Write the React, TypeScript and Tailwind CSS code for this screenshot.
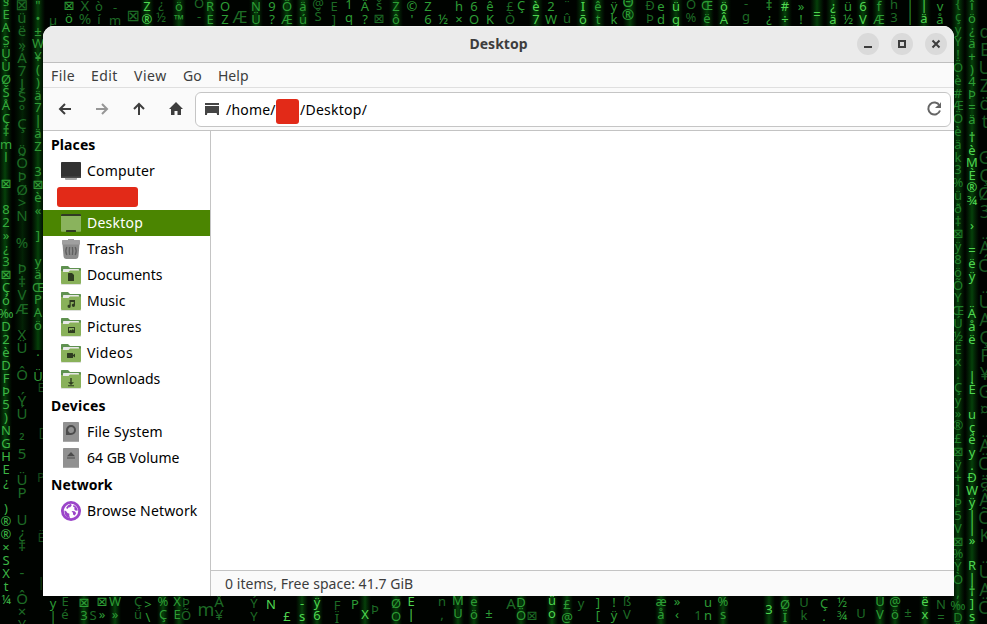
import React from "react";

type Rain = { x: number; y: number; chars: string; step?: number; size?: number; color?: string };

const BRIGHT = "#4fd650";
const MID = "#2d9d35";
const DIM = "#1d6a25";

// Each stream is one vertical run of glyphs; a space leaves a gap.
const STREAMS: Rain[] = [
  { x: 6, y: 6, chars: "§EASÜÙØŠÅÇ‡ml ⊠ 82»¿3⊠", color: "#35ab3c", step: 13 },
  { x: 6, y: 292, chars: "Çó‰D2èDFÞ5)NGHE¿ )®®×SXt¼", color: "#3cb544", step: 13 },
  { x: 22, y: 10, chars: "⊠üë»Á7JŠ°Ç öÕÞØ>N % Þ‡VÆ XÜ Ô ÝÚ ²5 ÜP U¿‡ - Ô×¥ÜE  1 i -  oü", step: 13.2, color: DIM, size: 15 },
  { x: 38, y: 10, chars: '"•±W¥()ä7|äZ 3⊠è« ] yäŒPAö . Ü', step: 12.8, color: "#329a37" },
  { x: 41, y: 392, chars: "Ë  [  P   Ë  |", step: 15, color: "#154a1a" },
  { x: 53, y: 25, chars: "µ", color: DIM },
  { x: 69, y: 10, chars: "⊠ö", color: MID }, { x: 85, y: 11, chars: "X%", color: DIM, size: 15 },
  { x: 99, y: 11, chars: "òí", color: DIM }, { x: 115, y: 12, chars: "-m", color: DIM },
  { x: 133, y: 21, chars: "⊠", color: DIM, size: 16 }, { x: 147, y: 11, chars: "Z®", color: BRIGHT },
  { x: 161, y: 9, chars: "¿½", color: DIM }, { x: 179, y: 11, chars: "ö™", color: MID },
  { x: 199, y: 8, chars: "Ö-", color: DIM }, { x: 210, y: 11, chars: "RE", color: MID },
  { x: 225, y: 11, chars: "ÖZ", color: MID }, { x: 240, y: 23, chars: "Æ", color: DIM, size: 17 },
  { x: 256, y: 11, chars: "NÜ", color: MID }, { x: 272, y: 11, chars: "9?", color: MID },
  { x: 287, y: 11, chars: "ÔÆ", color: MID }, { x: 303, y: 11, chars: "äú", color: MID },
  { x: 318, y: 8, chars: "@Š", color: DIM }, { x: 334, y: 11, chars: "E]", color: DIM },
  { x: 349, y: 9, chars: "1q", color: MID }, { x: 365, y: 11, chars: "Â?", color: MID },
  { x: 379, y: 10, chars: "š⊠", color: DIM }, { x: 396, y: 11, chars: "Zô", color: MID },
  { x: 412, y: 11, chars: "©'", color: MID }, { x: 428, y: 11, chars: "Z6", color: MID },
  { x: 443, y: 24, chars: "½", color: MID }, { x: 459, y: 11, chars: "h×", color: MID },
  { x: 474, y: 11, chars: "6O", color: MID }, { x: 490, y: 11, chars: "êK", color: MID },
  { x: 510, y: 11, chars: "£Ò", color: DIM }, { x: 521, y: 10, chars: "Ç", color: MID },
  { x: 536, y: 11, chars: "è7", color: BRIGHT }, { x: 551, y: 11, chars: "2W", color: MID },
  { x: 567, y: 10, chars: "¨û", color: DIM }, { x: 583, y: 11, chars: "Ïõ", color: BRIGHT },
  { x: 598, y: 11, chars: "êt", color: MID }, { x: 614, y: 11, chars: "ÿk", color: MID },
  { x: 628, y: 7, chars: "Θ®", color: MID, size: 15 }, { x: 650, y: 10, chars: "ÐÞ", color: DIM },
  { x: 661, y: 11, chars: "ed", color: MID }, { x: 676, y: 11, chars: "üg", color: BRIGHT },
  { x: 691, y: 9, chars: "Ö%", color: DIM }, { x: 707, y: 10, chars: "Œë", color: MID },
  { x: 724, y: 11, chars: "öÂ", color: BRIGHT }, { x: 746, y: 8, chars: "-g", color: DIM },
  { x: 769, y: 10, chars: "‡¿", color: MID }, { x: 785, y: 11, chars: "#÷", color: BRIGHT },
  { x: 801, y: 11, chars: "»!", color: MID }, { x: 817, y: 19, chars: "=", color: BRIGHT },
  { x: 833, y: 11, chars: "¿ä", color: BRIGHT }, { x: 848, y: 11, chars: "ü½", color: MID },
  { x: 863, y: 11, chars: "6V", color: BRIGHT }, { x: 879, y: 11, chars: "fÆ", color: MID },
  { x: 894, y: 9, chars: "h3", color: DIM }, { x: 910, y: 9, chars: "||", color: MID },
  { x: 924, y: 10, chars: "|ä", color: BRIGHT }, { x: 940, y: 11, chars: "vå", color: MID },
  { x: 958, y: 8, chars: "{çyY!Öè#ÆÖèäk3%üð‡⊠ÿ8öÕYŒÚ½Ëx.Çy»®£⊠ÿ+]Þ5V⊠%ŸÒ,‰DÄ", step: 12.8, color: "#21802a" },
  { x: 985, y: 38, chars: "dEUZöt GÇØ3 ÄÓ ÜAÇF¥G¤ ÄÖäÂÕK ÜAÖ", step: 18, color: "#185820", size: 18 },
  { x: 972, y: 10, chars: "îö¿ä+)4Þ=ä", step: 12.7, color: MID },
  { x: 972, y: 142, chars: "†èMÈ®¾ › =ëÿ  Äåë  |È uçëy.ÐWÿ||» R|†]s  ó", step: 12.6, color: BRIGHT },
  { x: 53, y: 608, chars: "y|", color: MID }, { x: 65, y: 606, chars: "Êé", color: DIM },
  { x: 84, y: 607, chars: "⊠3", color: MID }, { x: 93, y: 620, chars: "S", color: DIM },
  { x: 102, y: 606, chars: "⊠»", color: MID }, { x: 115, y: 606, chars: "W»", color: MID },
  { x: 138, y: 606, chars: "Çü", color: DIM }, { x: 148, y: 609, chars: ">\\", color: MID },
  { x: 163, y: 606, chars: "%Ç", color: MID }, { x: 177, y: 606, chars: "XE", color: MID },
  { x: 186, y: 607, chars: "ÞÕ", color: DIM }, { x: 206, y: 616, chars: "m", color: DIM, size: 18 },
  { x: 219, y: 607, chars: "Å¥", color: DIM, size: 15 }, { x: 254, y: 608, chars: "ÝY", color: DIM },
  { x: 271, y: 609, chars: "N", color: BRIGHT }, { x: 287, y: 621, chars: "£", color: BRIGHT },
  { x: 302, y: 608, chars: "-s", color: BRIGHT }, { x: 317, y: 607, chars: "ÿ6", color: BRIGHT },
  { x: 337, y: 610, chars: "FÏ", color: DIM }, { x: 355, y: 609, chars: "P", color: MID },
  { x: 365, y: 619, chars: "X", color: BRIGHT }, { x: 375, y: 614, chars: "Þ", color: DIM },
  { x: 396, y: 608, chars: "ØO", color: MID }, { x: 411, y: 606, chars: "Ë|", color: BRIGHT },
  { x: 442, y: 606, chars: "n,", color: DIM }, { x: 458, y: 605, chars: "MU", color: MID },
  { x: 474, y: 606, chars: "eö", color: MID }, { x: 489, y: 618, chars: "±", color: MID },
  { x: 511, y: 609, chars: "A", color: DIM, size: 15 }, { x: 521, y: 607, chars: "DÖ", color: MID },
  { x: 532, y: 620, chars: "⊠", color: DIM }, { x: 552, y: 605, chars: "üo", color: BRIGHT },
  { x: 567, y: 609, chars: "£@", color: MID }, { x: 581, y: 608, chars: "y", color: DIM },
  { x: 598, y: 607, chars: "][", color: MID }, { x: 614, y: 607, chars: "!ÿ", color: MID },
  { x: 627, y: 606, chars: "ßV", color: DIM }, { x: 661, y: 606, chars: "æå", color: MID },
  { x: 677, y: 606, chars: "»‹", color: MID }, { x: 698, y: 620, chars: "1", color: DIM },
  { x: 708, y: 607, chars: "un", color: MID }, { x: 723, y: 606, chars: "%s", color: MID },
  { x: 769, y: 614, chars: "3", color: BRIGHT }, { x: 785, y: 609, chars: "ØÏ", color: MID },
  { x: 804, y: 607, chars: "Uk", color: DIM }, { x: 824, y: 608, chars: "Ç.", color: MID },
  { x: 842, y: 607, chars: "½¾", color: MID }, { x: 861, y: 618, chars: "U", color: DIM },
  { x: 880, y: 606, chars: "ÜV", color: MID }, { x: 895, y: 606, chars: "@ö", color: MID },
  { x: 908, y: 617, chars: "±", color: DIM }, { x: 925, y: 606, chars: "ëx", color: BRIGHT },
  { x: 941, y: 609, chars: "N=", color: DIM }
];

const GLOWS = [5, 38, 147, 179, 210, 256, 287, 303, 396, 536, 583, 598, 630, 676, 707, 724, 785, 817, 833, 863, 879, 924, 958, 972];
const LOW_GLOWS = [84, 115, 163, 179, 302, 317, 365, 396, 458, 474, 521, 552, 567, 661, 723, 769, 785, 880, 895, 925];

function Wallpaper() {
  return (
    <svg className="absolute inset-0" width="987" height="624" viewBox="0 0 987 624" aria-hidden="true">
      <defs>
        <linearGradient id="glow">
          <stop offset="0" stopColor="#064c0c" stopOpacity="0" />
          <stop offset=".5" stopColor="#08620f" stopOpacity=".65" />
          <stop offset="1" stopColor="#064c0c" stopOpacity="0" />
        </linearGradient>
      </defs>
      <rect width="987" height="624" fill="#000300" />
      {GLOWS.map((x) => <rect key={x} x={x - 7} y="0" width="14" height={x > 950 ? 624 : x < 20 ? 450 : x < 50 ? 350 : 27} fill="url(#glow)" />)}
      {LOW_GLOWS.map((x) => <rect key={x} x={x - 6} y="594" width="12" height="30" fill="url(#glow)" />)}
      <rect x="14" width="17" height="330" fill="url(#glow)" opacity=".5" />
      {STREAMS.map((s, n) => (
        <g key={n} fill={s.color} fontFamily="Noto Sans, DejaVu Sans, sans-serif" fontSize={s.size ?? 13} textAnchor="middle">
          {Array.from(s.chars).map((c, i) => c === " " ? null : <text key={i} x={s.x} y={s.y + i * (s.step ?? 13)}>{c}</text>)}
        </g>
      ))}
    </svg>
  );
}

type Glyph = "document" | "music" | "picture" | "video" | "download";

function Folder({ glyph }: { glyph: Glyph }) {
  return (
    <svg width="20" height="20" viewBox="0 0 20 20">
      <path d="M0 1.800Q0 1 .8 1H7l2 2h10.200q.8 0 .8.8V12H0Z" fill="#5f9150" />
      <path d="M0 6h20v12.300q0 .7-.7.7H.7q-.7 0-.7-.7Z" fill="#89b15a" />
      <path d="M2 4.700q0-.7.7-.7h14.600q.7 0 .7.7V6H9.200L8 7H2Z" fill="#e8e8e8" />
      <path d="M0 7h7.500l1.500-1.500H20V8H0Z" fill="#89b15a" />
      <path d="M0 18.300q0 .7.7.7h18.600q.7 0 .7-.7v.9q0 .6-.7.6H.7q-.7 0-.7-.6Z" fill="#d4d7d1" />
      <g fill="#2e3b20">
        {glyph === "document" && <path d="M7 8.500q0-.5.5-.5H11l2 2v5.500q0 .5-.5.5h-5q-.5 0-.5-.5Z" />}
        {glyph === "music" && <path d="M8.500 9H14v5.300a1.600 1.600 0 1 1-1.200-1.500V11H9.700v4.300a1.600 1.600 0 1 1-1.200-1.500Z" />}
        {glyph === "picture" && <path fillRule="evenodd" d="M7.500 10h6q.5 0 .5.500v5q0 .5-.5.5h-6q-.5 0-.5-.5v-5q0-.5.5-.5ZM8 11v3l1.500-1.300 1 .8 1.300-1.500L13 13.500V11Z" />}
        {glyph === "video" && <path d="M6.500 10h5q.5 0 .5.500V12l2-1.500v4L12 13v1.500q0 .5-.5.5h-5q-.5 0-.5-.5v-4q0-.5.5-.5Z" />}
        {glyph === "download" && <path d="M9.300 9h1.400v4.200H13L10 16l-3-2.800h2.300ZM7 16.200h6v1H7Z" />}
      </g>
    </svg>
  );
}

function ComputerIcon() {
  return <svg width="20" height="20" viewBox="0 0 20 20"><path d="M4 17h12v1q0 1-1 1H5q-1 0-1-1Z" fill="#a7a7a7" /><rect y="1" width="20" height="16" rx=".8" fill="#323232" /><path d="M0 15.500h20v.7q0 .8-.8.8H.8q-.8 0-.8-.8Z" fill="#4a4a4a" /></svg>;
}
function DesktopIcon() {
  return <svg width="20" height="20" viewBox="0 0 20 20"><path d="M0 1.700Q0 1 .7 1h18.600q.7 0 .7.700V18q0 .8-.8.8H.8Q0 18.800 0 18Z" fill="#8ab35d" /><path d="M0 1.700Q0 1 .7 1h18.600q.7 0 .7.700V3H0Z" fill="#303b23" /><path d="M5 19v-1.400q0-.6.6-.6h8.800q.6 0 .6.600V19Z" fill="#303b23" /></svg>;
}
function TrashIcon() {
  return <svg width="20" height="20" viewBox="0 0 20 20"><path d="M7 0h6v2H7Z" fill="#999" /><path d="M1.500 5h17l-1 12q-.2 3-3 3h-9q-2.800 0-3-3Z" fill="#8c8c8c" /><rect x="1" y="1" width="18" height="4.500" rx=".6" fill="#a0a0a0" /><g fill="none" stroke="#606060" strokeWidth="1.400"><path d="M5.800 8q-2 4 0 8M8.600 8q-.7 4 0 8M11.400 8q.7 4 0 8M14.200 8q2 4 0 8" /></g></svg>;
}
function DriveIcon({ removable = false }: { removable?: boolean }) {
  return <svg width="20" height="20" viewBox="0 0 20 20"><rect x="2" width="16" height="20" rx=".8" fill="#919191" /><path d="M2 19h16v.2q0 .8-.8.8H2.800q-.8 0-.8-.8Z" fill="#a9a9a9" />{removable ? <path d="m10 4 4 4.200H6ZM6 9.500h8v1H6Z" fill="#4b4b4b" /> : <path fillRule="evenodd" fill="#4c4c4c" d="M10 3a5 5 0 0 1 0 10H5V8a5 5 0 0 1 5-5Zm0 2a3 3 0 0 0-2 5.200L9 11h1a3 3 0 0 0 0-6Z" />}</svg>;
}
function NetworkIcon() {
  return (
    <svg width="20" height="20" viewBox="0 0 20 20">
      <circle cx="10" cy="10" r="10" fill="#9b45c9" />
      <circle cx="10" cy="10" r="7.200" fill="#fff" />
      <path fill="#9b45c9" d="M3.500 9.500 5 10l1.500 2 2 .8-.3 1.500L9 17c-3.500-.3-6-3.500-5.500-7.500ZM7 4.200l3-1.400.7 1.700-1.500 1.800-1.700.2L6.500 8 5 7ZM12.500 4c2.300.8 4 3 4.300 5.500l-2 .3-1.600-1.500.4-1.800-1.600-1ZM10.500 10l3 .3 1.700 1.700-1.400 2.500-1.600-.8-.3-1.900Z" />
    </svg>
  );
}

type Item = { label: string; icon: React.ReactNode; spacing?: string; active?: boolean };
const places: Item[] = [
  { label: "Desktop", icon: <DesktopIcon />, spacing: "tracking-[0.25px]", active: true },
  { label: "Trash", icon: <TrashIcon />, spacing: "tracking-[0.3px]" },
  { label: "Documents", icon: <Folder glyph="document" /> },
  { label: "Music", icon: <Folder glyph="music" /> },
  { label: "Pictures", icon: <Folder glyph="picture" />, spacing: "tracking-[0.25px]" },
  { label: "Videos", icon: <Folder glyph="video" />, spacing: "tracking-[0.4px]" },
  { label: "Downloads", icon: <Folder glyph="download" /> }
];

function Row({ label, icon, spacing, active }: Item) {
  return <div className={`flex h-[26px] shrink-0 items-center gap-1.5 whitespace-nowrap pl-[18px] ${active ? "bg-[#4b8501] text-white" : ""}`}><span className="shrink-0">{icon}</span><span className={spacing}>{label}</span></div>;
}
function Heading({ children, className = "" }: { children: React.ReactNode; className?: string }) {
  return <h2 className={`flex h-[27px] shrink-0 items-center pl-2 font-bold ${className}`}>{children}</h2>;
}
function WindowButton({ label, children }: { label: string; children: React.ReactNode }) {
  return <button aria-label={label} className="flex size-[22px] items-center justify-center rounded-full bg-[#dadada]"><svg width="12" height="12" viewBox="0 0 12 12" fill="none" stroke="#3d3d3d" strokeWidth="2">{children}</svg></button>;
}

export default function App() {
  return (
    <div className="relative h-[624px] w-[987px] overflow-hidden bg-black font-['Noto_Sans',sans-serif] text-[14px] leading-5 text-black">
      <Wallpaper />
      <div className="relative pl-[43px] pt-[26px]">
        <main className="flex h-[570px] w-[911px] flex-col overflow-hidden rounded-t-[11px] bg-[#fafafa]">
          <header className="grid h-[37px] shrink-0 grid-cols-[1fr_auto_1fr] items-center border-b border-[#bfbfbf] bg-[#ebebeb] pr-[7px] shadow-[inset_0_1px_#f5f5f5]">
            <span />
            <h1 className="pl-[7px] font-bold text-[#3d3d3d]">Desktop</h1>
            <div className="flex justify-end gap-3">
              <WindowButton label="Minimize"><path d="M2 9h8" /></WindowButton>
              <WindowButton label="Maximize"><path d="M3 3h6v6H3Z" /></WindowButton>
              <WindowButton label="Close"><path d="m2.500 2.500 7 7m0-7-7 7" /></WindowButton>
            </div>
          </header>
          <nav className="flex h-[25px] shrink-0 items-center border-b border-[#dfdfdf] pl-2 pt-0.5 text-[#3d3d3d]">
            <span className="w-10 tracking-[0.4px]">File</span>
            <span className="w-[43px] tracking-[0.4px]">Edit</span>
            <span className="w-[49px] tracking-[0.5px]">View</span>
            <span className="w-[35px]">Go</span>
            <span>Help</span>
          </nav>
          <div className="flex h-[43px] shrink-0 items-center border-b border-[#c3c3c3] pl-3.5 pr-[3px]">
            <svg width="138" height="16" viewBox="0 0 138 16" fill="none" stroke="#3d3d3d" strokeWidth="2">
              <path d="M14 8H3M8 3 3 8l5 5" />
              <path d="M39 8h11M45 3l5 5-5 5" stroke="#969696" />
              <path d="M82 14V3M77 8l5-5 5 5" />
              <path d="m119 1 7 7h-2v6h-3.500v-4h-3v4H114V8h-2Z" fill="#3d3d3d" stroke="none" />
            </svg>
            <div className="flex h-[35px] flex-1 items-center rounded-md border border-[#c5c5c5] bg-white pl-[9px] pr-2">
              <svg width="14" height="14" viewBox="0 0 14 14" fill="#454545"><path d="M0 1h14v2H0ZM0 4h14v9h-2v-1q0-1-1-1H3q-1 0-1 1v1H0Z" /></svg>
              <span className="ml-[7px] w-[50px] pt-0.5 tracking-[0.2px]">/home/</span>
              <span className="h-[25px] w-[23px] translate-y-0.5 rounded-[3px] bg-[#e22a18]" />
              <span className="flex-1 pt-0.5 pl-px tracking-[0.25px]">/Desktop/</span>
              <svg width="16" height="16" viewBox="0 0 16 16" fill="none" stroke="#656565" strokeWidth="2"><path d="M13.500 4.500A6 6 0 1 0 14 9.500" /><path d="M15 1v6H9l2-2 2-1Z" fill="#656565" stroke="none" /></svg>
            </div>
          </div>
          <div className="flex min-h-0 flex-1">
            <aside className="flex w-[168px] shrink-0 flex-col border-r border-[#c4c4c4] bg-white">
              <Heading className="tracking-[0.1px]">Places</Heading>
              <Row label="Computer" icon={<ComputerIcon />} spacing="tracking-[0.2px]" />
              <div className="h-[26px] shrink-0 pl-3.5 pt-[3px]"><div className="h-5 w-[81px] rounded-[3px] bg-[#e22a18]" /></div>
              {places.map((p) => <Row key={p.label} {...p} />)}
              <Heading className="tracking-[0.25px]">Devices</Heading>
              <Row label="File System" icon={<DriveIcon />} spacing="tracking-[0.2px]" />
              <Row label="64 GB Volume" icon={<DriveIcon removable />} />
              <Heading>Network</Heading>
              <Row label="Browse Network" icon={<NetworkIcon />} spacing="tracking-[0.15px]" />
            </aside>
            <section className="flex flex-1 flex-col">
              <div className="flex-1 bg-white" />
              <footer className="flex h-[26px] shrink-0 items-center border-t border-[#c4c4c4] pl-3.5 tracking-[0.04px] text-[#3d3d3d]">0 items, Free space: 41.7 GiB</footer>
            </section>
          </div>
        </main>
      </div>
    </div>
  );
}
